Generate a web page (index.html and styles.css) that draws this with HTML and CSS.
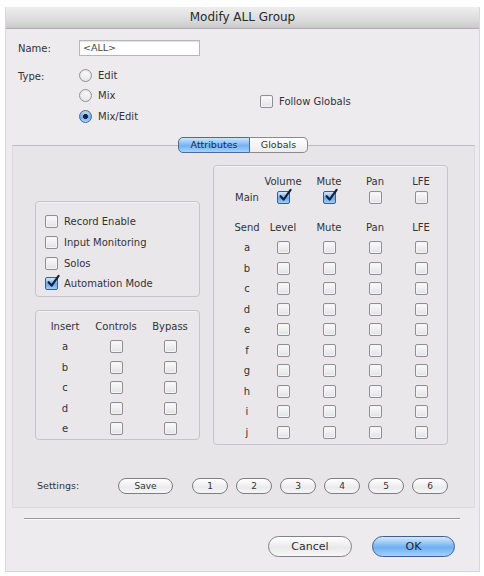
FILE: index.html
```html
<!DOCTYPE html>
<html>
<head>
<meta charset="utf-8">
<link rel="stylesheet" href="styles.css">
</head>
<body>
<div class="window">
  <div class="titlebar">Modify ALL Group</div>
  <div class="form">
    <div class="lbl name-lbl">Name:</div>
    <div class="field"><div class="input">&lt;ALL&gt;</div></div>
    <div class="lbl type-lbl">Type:</div>
    <div class="type-cell">
      <div class="radios">
        <div class="radio-row"><span class="radio"></span><span>Edit</span></div>
        <div class="radio-row"><span class="radio"></span><span>Mix</span></div>
        <div class="radio-row"><span class="radio on"></span><span>Mix/Edit</span></div>
      </div>
      <div class="follow"><span class="cb"></span><span>Follow Globals</span></div>
    </div>
  </div>

  <div class="tabs">
    <div class="tab sel">Attributes</div>
    <div class="tab">Globals</div>
  </div>

  <div class="panel">
    <div class="panel-body">
      <div class="left-col">
        <div class="box box-opts">
          <div class="opt"><span class="cb"></span><span>Record Enable</span></div>
          <div class="opt"><span class="cb"></span><span>Input Monitoring</span></div>
          <div class="opt"><span class="cb"></span><span>Solos</span></div>
          <div class="opt"><span class="cb on"><svg viewBox="0 0 14 14"><path d="M2.6 7.2 L5.6 10.6 L12.6 0.8"/></svg></span><span>Automation Mode</span></div>
        </div>
        <div class="box box-insert">
          <div class="igrid">
            <div class="c">Insert</div><div class="c">Controls</div><div class="c">Bypass</div>
            <div class="c">a</div><div class="c"><span class="cb"></span></div><div class="c"><span class="cb"></span></div>
            <div class="c">b</div><div class="c"><span class="cb"></span></div><div class="c"><span class="cb"></span></div>
            <div class="c">c</div><div class="c"><span class="cb"></span></div><div class="c"><span class="cb"></span></div>
            <div class="c">d</div><div class="c"><span class="cb"></span></div><div class="c"><span class="cb"></span></div>
            <div class="c">e</div><div class="c"><span class="cb"></span></div><div class="c"><span class="cb"></span></div>
          </div>
        </div>
      </div>
      <div class="box box-right">
        <div class="mgrid">
          <div class="c lab"></div><div class="c">Volume</div><div class="c">Mute</div><div class="c">Pan</div><div class="c">LFE</div>
          <div class="c lab">Main</div>
          <div class="c"><span class="cb on"><svg viewBox="0 0 14 14"><path d="M2.6 7.2 L5.6 10.6 L12.6 0.8"/></svg></span></div>
          <div class="c"><span class="cb on"><svg viewBox="0 0 14 14"><path d="M2.6 7.2 L5.6 10.6 L12.6 0.8"/></svg></span></div>
          <div class="c"><span class="cb"></span></div>
          <div class="c"><span class="cb"></span></div>
        </div>
        <div class="sgrid">
          <div class="c lab">Send</div><div class="c">Level</div><div class="c">Mute</div><div class="c">Pan</div><div class="c">LFE</div>
          <div class="c lab">a</div><div class="c"><span class="cb"></span></div><div class="c"><span class="cb"></span></div><div class="c"><span class="cb"></span></div><div class="c"><span class="cb"></span></div>
          <div class="c lab">b</div><div class="c"><span class="cb"></span></div><div class="c"><span class="cb"></span></div><div class="c"><span class="cb"></span></div><div class="c"><span class="cb"></span></div>
          <div class="c lab">c</div><div class="c"><span class="cb"></span></div><div class="c"><span class="cb"></span></div><div class="c"><span class="cb"></span></div><div class="c"><span class="cb"></span></div>
          <div class="c lab">d</div><div class="c"><span class="cb"></span></div><div class="c"><span class="cb"></span></div><div class="c"><span class="cb"></span></div><div class="c"><span class="cb"></span></div>
          <div class="c lab">e</div><div class="c"><span class="cb"></span></div><div class="c"><span class="cb"></span></div><div class="c"><span class="cb"></span></div><div class="c"><span class="cb"></span></div>
          <div class="c lab">f</div><div class="c"><span class="cb"></span></div><div class="c"><span class="cb"></span></div><div class="c"><span class="cb"></span></div><div class="c"><span class="cb"></span></div>
          <div class="c lab">g</div><div class="c"><span class="cb"></span></div><div class="c"><span class="cb"></span></div><div class="c"><span class="cb"></span></div><div class="c"><span class="cb"></span></div>
          <div class="c lab">h</div><div class="c"><span class="cb"></span></div><div class="c"><span class="cb"></span></div><div class="c"><span class="cb"></span></div><div class="c"><span class="cb"></span></div>
          <div class="c lab">i</div><div class="c"><span class="cb"></span></div><div class="c"><span class="cb"></span></div><div class="c"><span class="cb"></span></div><div class="c"><span class="cb"></span></div>
          <div class="c lab">j</div><div class="c"><span class="cb"></span></div><div class="c"><span class="cb"></span></div><div class="c"><span class="cb"></span></div><div class="c"><span class="cb"></span></div>
        </div>
      </div>
    </div>
    <div class="settings">
      <div class="set-lbl">Settings:</div>
      <div class="sbtn save">Save</div>
      <div class="nums">
        <div class="sbtn">1</div>
        <div class="sbtn">2</div>
        <div class="sbtn">3</div>
        <div class="sbtn">4</div>
        <div class="sbtn">5</div>
        <div class="sbtn">6</div>
      </div>
    </div>
  </div>

  <div class="sep"></div>
  <div class="actions">
    <div class="btn">Cancel</div>
    <div class="btn ok">OK</div>
  </div>
</div>
</body>
</html>
```

FILE: styles.css
```css
* { box-sizing: border-box; }
html, body { margin: 0; padding: 0; background: #ffffff; }
body {
  font-family: "DejaVu Sans", "Liberation Sans", sans-serif;
  font-size: 10px;
  color: #333335;
}
.window {
  margin: 7px 0 0 5px;
  width: 475px;
  height: 565px;
  background: #edebee;
  border: 1px solid #d8d6da;
  border-top: none;
}
.titlebar {
  height: 22px;
  line-height: 21px;
  text-align: center;
  font-size: 12px;
  color: #2a2a2a;
  background: linear-gradient(#eeeeee, #dcdcdc 60%, #cacaca);
  border-bottom: 1px solid #b0b0b0;
}
.form {
  display: grid;
  grid-template-columns: 61px 1fr;
  padding: 11px 0 0 12px;
  row-gap: 13px;
}
.name-lbl { align-self: center; }
.type-lbl { line-height: 18px; margin-top: -1px; }
.input {
  width: 121px;
  height: 16px;
  background: #ffffff;
  border: 1px solid #b8b6ba;
  box-shadow: inset 0 1px 1px rgba(0,0,0,0.12);
  font-size: 9.5px;
  line-height: 14px;
  padding-left: 3px;
  color: #444;
}
.type-cell { display: flex; margin-top: -4px; }
.radios { width: 181px; display: flex; flex-direction: column; }
.radio-row { height: 20.5px; display: flex; align-items: center; gap: 6px; }
.radio {
  width: 13px; height: 13px; border-radius: 50%;
  border: 1px solid #929296;
  background: linear-gradient(#ffffff, #e4e4e6);
  box-shadow: inset 0 1px 2px rgba(0,0,0,0.12);
  display: inline-block;
  flex: none;
}
.radio.on {
  border-color: #4a6892;
  background: radial-gradient(circle at 50% 50%, #1b2440 0 2.2px, transparent 2.8px), linear-gradient(#d3e8fb, #6fb0ee 55%, #a9d4fa);
}
.follow { display: flex; align-items: center; gap: 6px; margin-top: 29px; height: 14px; }

.cb {
  width: 13px; height: 13px;
  border-radius: 2px;
  border: 1px solid #8f8e93;
  background: linear-gradient(#fbfbfb, #e2e2e5);
  box-shadow: inset 0 0 0 1px #f4f4f6;
  display: inline-block;
  flex: none;
  position: relative;
}
.cb.on {
  border-color: #3e5d8a;
  background: linear-gradient(#d6eafc, #6aaaea 55%, #9fcdf8);
  box-shadow: none;
}
.cb svg {
  position: absolute;
  left: 0; top: -3px;
  width: 14px; height: 14px;
  overflow: visible;
}
.cb svg path {
  fill: none;
  stroke: #17203e;
  stroke-width: 2.2;
  stroke-linecap: round;
  stroke-linejoin: round;
}

.tabs {
  display: flex;
  justify-content: center;
  margin: 10px 0 -8px 0;
  padding-left: 1px;
  position: relative;
  z-index: 1;
}
.tab {
  height: 16px;
  line-height: 14px;
  font-size: 9.5px;
  text-align: center;
  border: 1px solid #8a8a8e;
  background: linear-gradient(#ffffff, #ececee);
  color: #333;
}
.tab.sel {
  width: 72px;
  border-radius: 5px 0 0 5px;
  border-color: #4b6b97;
  background: linear-gradient(#cfe6fb, #73b3f0 55%, #a8d3fa);
  color: #1e2a44;
}
.tab:not(.sel) {
  width: 58px;
  border-left: none;
  border-radius: 0 5px 5px 0;
}

.panel {
  margin: 0 4px 0 6px;
  background: #e7e5e8;
  border: 1px solid #dcdadd;
  border-top: 1px solid #bdbbbf;
  padding: 19px 0 13px 22px;
}
.panel-body { display: flex; gap: 13px; align-items: flex-start; }
.left-col { display: flex; flex-direction: column; gap: 13px; margin-top: 36px; width: 165px; }
.box {
  border: 1px solid #c6c4c8;
  border-radius: 4px;
  background: #e9e7ea;
  box-shadow: inset 0 1px 0 #f3f1f4;
}
.box-opts { height: 96px; padding: 10px 0 0 9px; }
.opt { height: 20.7px; display: flex; align-items: center; gap: 6px; }

.box-insert { height: 130px; padding: 6px 0 0 8px; }
.igrid {
  display: grid;
  grid-template-columns: 42px 60px 48px;
  grid-template-rows: 20px repeat(5, 20.5px);
}
.c { display: flex; align-items: center; justify-content: center; }

.box-right { width: 235px; height: 280px; padding-top: 8px; }
.mgrid {
  display: grid;
  grid-template-columns: 46px repeat(4, 46px);
  grid-template-rows: 16px 16px;
}
.sgrid {
  display: grid;
  grid-template-columns: 46px repeat(4, 46px);
  grid-template-rows: 20px repeat(10, 20.5px);
  margin-top: 12px;
}
.lab { padding-left: 20px; }

.settings {
  display: flex;
  align-items: center;
  margin-top: 33px;
  height: 16px;
}
.set-lbl { width: 83px; padding-left: 2px; font-size: 9.5px; }
.sbtn {
  width: 36px;
  height: 16px;
  border-radius: 8px;
  border: 1px solid #7e7d82;
  background: linear-gradient(#ffffff, #ebebed 60%, #f6f6f7);
  font-size: 9px;
  line-height: 14px;
  text-align: center;
  color: #333;
}
.sbtn.save { width: 55px; margin-right: 19px; }
.nums { display: flex; gap: 8px; }

.sep {
  margin: 10px 19px 0 18px;
  height: 2px;
  border-top: 1px solid #9c9a9f;
  border-bottom: 1px solid #f8f8f8;
}
.actions {
  display: flex;
  justify-content: flex-end;
  gap: 20px;
  margin: 16px 24px 0 0;
}
.btn {
  width: 84px;
  height: 21px;
  border-radius: 11px;
  border: 1px solid #838287;
  background: linear-gradient(#ffffff, #e9e9eb 55%, #f7f7f8);
  text-align: center;
  line-height: 19px;
  font-size: 11px;
  color: #2e2e30;
}
.btn.ok {
  width: 83px;
  border-color: #3f5f8e;
  background: linear-gradient(#d3e9fc, #6eaff0 55%, #a5d2fb);
  color: #1b2440;
}
```
